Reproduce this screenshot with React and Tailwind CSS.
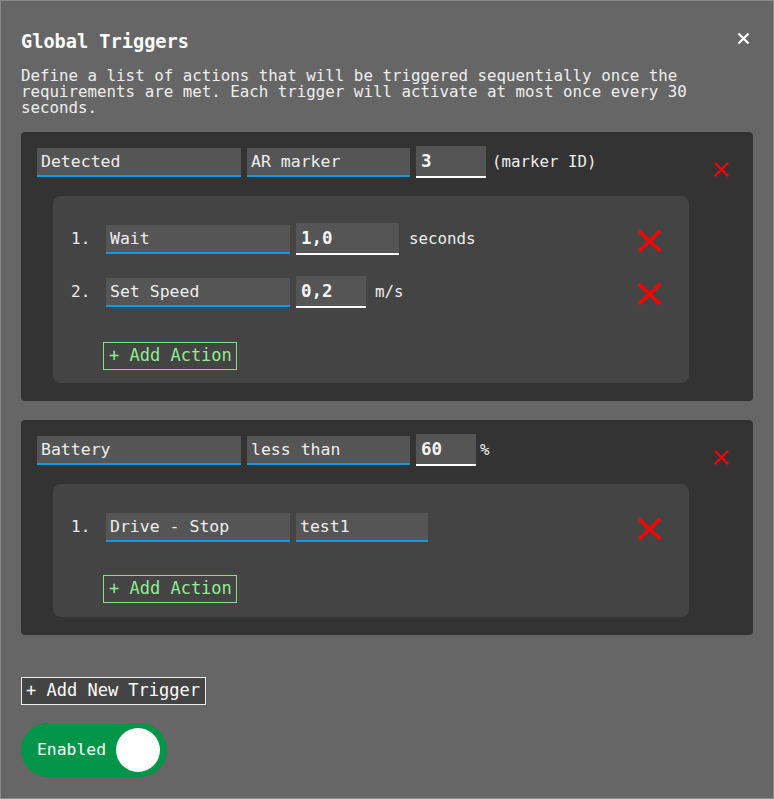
import React from "react";

const mono = { fontFamily: '"DejaVu Sans Mono", "Liberation Mono", monospace' };

function TextField({ value, width }) {
  return (
    <input
      readOnly
      defaultValue={value}
      className="h-[29px] bg-[#555555] border-b-2 border-[#0a9be8] pl-[4px] text-[16.5px] text-[#eeeeee] outline-none"
      style={{ width }}
    />
  );
}

function NumField({ value, width }) {
  return (
    <input
      readOnly
      defaultValue={value}
      className="h-[32px] bg-[#555555] border-b-2 border-white pl-[5px] text-[17.5px] font-bold text-[#f4f4f4] outline-none"
      style={{ width }}
    />
  );
}

function SmallX() {
  return (
    <svg width="15" height="15" viewBox="0 0 15 15">
      <path d="M1.5 1.5 L13.5 13.5 M13.5 1.5 L1.5 13.5" stroke="#ff0000" strokeWidth="2.2" strokeLinecap="round" />
    </svg>
  );
}

function BigX() {
  return (
    <svg width="23" height="22" viewBox="0 0 23 22">
      <path d="M2 2 L21 20 M21 2 L2 20" stroke="#ff0000" strokeWidth="3.6" strokeLinecap="round" />
    </svg>
  );
}

function ActionRow({ n, name, value, valueKind, valueWidth, unit, unitGap }) {
  return (
    <div className="flex h-[32px] items-center">
      <span className="w-[35px] text-[16px] text-[#eeeeee]">{n}.</span>
      <TextField value={name} width={184} />
      <div className="ml-[6px]">
        {valueKind === "num" ? (
          <NumField value={value} width={valueWidth} />
        ) : (
          <TextField value={value} width={valueWidth} />
        )}
      </div>
      {unit && (
        <span className="text-[15.8px] text-[#eeeeee]" style={{ marginLeft: unitGap }}>
          {unit}
        </span>
      )}
      <div className="ml-auto mr-[28px] mt-[4px]">
        <BigX />
      </div>
    </div>
  );
}

function AddAction({ mt }) {
  return (
    <button
      className="ml-[32px] h-[28px] w-[134px] border border-[#8fdc8f] text-left pl-[5px] text-[17px] text-[#90ee90]"
      style={{ marginTop: mt }}
    >
      + Add Action
    </button>
  );
}

function TriggerCard({ header, children }) {
  return (
    <div className="flex rounded-[4px] bg-[#333333] pl-[16px] pr-[16px] pt-[14px] pb-[18px]">
      <div className="flex-1">
        <div className="flex h-[32px] items-center gap-[6px]">{header}</div>
        <div className="mt-[18px] ml-[16px] rounded-[8px] bg-[#444444] pl-[18px] pt-[27px]">{children}</div>
      </div>
      <div className="w-[48px] shrink-0">
        <div className="ml-[25px] mt-[16px]">
          <SmallX />
        </div>
      </div>
    </div>
  );
}

export default function App() {
  return (
    <div className="h-[799px] w-[774px] border border-[#8a8a8a] bg-[#666666] px-[20px] pt-[30px]" style={mono}>
      <div className="flex items-start justify-between">
        <h3 className="text-[18.6px] font-bold leading-[22px] text-white">Global Triggers</h3>
        <svg width="13" height="13" viewBox="0 0 13 13" className="mr-[3px] mt-[1px]">
          <path d="M1.5 1.5 L11.5 11.5 M11.5 1.5 L1.5 11.5" stroke="white" strokeWidth="2.2" />
        </svg>
      </div>
      <p className="mt-[15px] pr-[40px] text-[15.8px] leading-[16px] text-[#eeeeee]">
        Define a list of actions that will be triggered sequentially once the requirements are met. Each trigger will activate at most once every 30 seconds.
      </p>

      <div className="mt-[16px] flex flex-col gap-[19px]">
        <TriggerCard
          header={
            <>
              <TextField value="Detected" width={204} />
              <TextField value="AR marker" width={163} />
              <NumField value="3" width={70} />
              <span className="text-[15.8px] text-[#eeeeee]">(marker ID)</span>
            </>
          }
        >
          <div className="flex flex-col gap-[21px]">
            <ActionRow n={1} name="Wait" value="1,0" valueKind="num" valueWidth={103} unit="seconds" unitGap={10} />
            <ActionRow n={2} name="Set Speed" value="0,2" valueKind="num" valueWidth={70} unit="m/s" unitGap={9} />
          </div>
          <AddAction mt={34} />
          <div className="h-[13px]" />
        </TriggerCard>

        <TriggerCard
          header={
            <>
              <TextField value="Battery" width={204} />
              <TextField value="less than" width={163} />
              <NumField value="60" width={60} />
              <span className="-ml-[2px] text-[15.8px] text-[#eeeeee]">%</span>
            </>
          }
        >
          <ActionRow n={1} name="Drive - Stop" value="test1" valueKind="text" valueWidth={132} />
          <AddAction mt={32} />
          <div className="h-[14px]" />
        </TriggerCard>
      </div>

      <button className="mt-[42px] block h-[28px] w-[185px] border border-[#eeeeee] bg-[#444444] text-left pl-[4px] text-[17px] text-white">
        + Add New Trigger
      </button>

      <div className="mt-[18px] flex h-[54px] w-[146px] items-center justify-between rounded-full bg-[#009548] pl-[16px] pr-[7px]">
        <span className="text-[16.4px] text-white">Enabled</span>
        <div className="h-[44px] w-[44px] rounded-full bg-white" />
      </div>
    </div>
  );
}
